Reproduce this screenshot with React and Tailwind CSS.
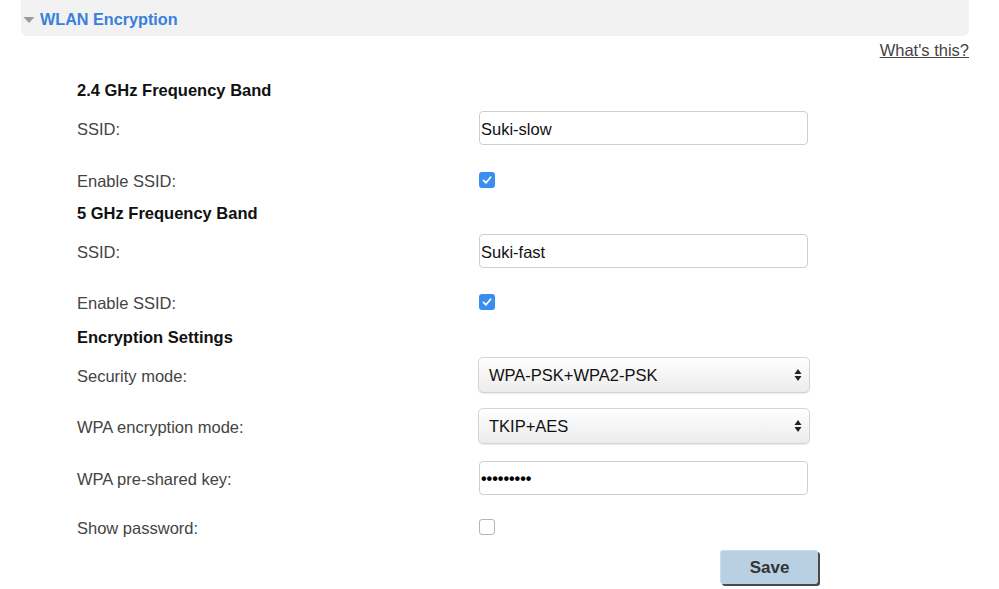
import React from "react";

const font = { fontFamily: '"Liberation Sans", Arial, sans-serif' };

function Check({ checked }) {
  if (checked) {
    return (
      <div className="w-[16px] h-[16px] rounded-[3px] bg-[#3b8ef0] flex items-center justify-center">
        <svg width="12" height="12" viewBox="0 0 12 12">
          <path d="M2.5 6.3 L5 8.8 L9.6 3.2" fill="none" stroke="#fff" strokeWidth="1.7" strokeLinecap="round" strokeLinejoin="round" />
        </svg>
      </div>
    );
  }
  return <div className="w-[16px] h-[16px] rounded-[3px] bg-white border border-[#b5b5b5]" />;
}

function TextBox({ children }) {
  return (
    <div className="w-[329px] h-[34px] border border-[#cfcfcf] rounded-[4px] bg-white flex items-center pl-[1px] pt-[2px] text-[16.5px] text-[#111]">
      {children}
    </div>
  );
}

function Select({ value }) {
  return (
    <div className="w-[332px] h-[36px] border border-[#d4d4d4] rounded-[5px] bg-gradient-to-b from-[#ffffff] to-[#ececec] shadow-[0_1px_1px_rgba(0,0,0,0.08)] flex items-center justify-between pl-[10px] pr-[7px] text-[16.5px] text-[#111]">
      <span className="pt-[1px]">{value}</span>
      <svg width="8" height="14" viewBox="0 0 8 14">
        <path d="M4 1 L7.5 6 L0.5 6 Z" fill="#222" />
        <path d="M4 13 L7.5 8 L0.5 8 Z" fill="#222" />
      </svg>
    </div>
  );
}

function Row({ label, mt, h, children }) {
  return (
    <div className={`flex items-center pl-[77px] ${mt} ${h}`}>
      <div className="w-[402px] text-[16.5px] text-[#444] pt-[2px]">{label}</div>
      <div>{children}</div>
    </div>
  );
}

function Heading({ mt, children }) {
  return (
    <div className={`flex items-center pl-[77px] h-[22px] pt-[2px] ${mt} text-[16.5px] font-bold text-[#111]`}>{children}</div>
  );
}

export default function App() {
  return (
    <div className="w-[999px] h-[589px] bg-white overflow-hidden" style={font}>
      <div className="ml-[21px] w-[948px] h-[36px] bg-[#f2f2f2] rounded-b-[6px] flex items-center">
        <svg width="12" height="8" viewBox="0 0 12 8" className="ml-[2px] mt-[3px]">
          <path d="M0.5 1 L11.5 1 L6 7 Z" fill="#9a9a9a" />
        </svg>
        <span className="ml-[5px] pt-[2px] text-[16.2px] font-bold text-[#3880dc]">WLAN Encryption</span>
      </div>
      <div className="flex justify-end pr-[30px] mt-[2px] h-[22px] items-center">
        <span className="text-[16.5px] pt-[2px] text-[#444] underline">What's this?</span>
      </div>

      <Heading mt="mt-[18px]">2.4 GHz Frequency Band</Heading>
      <Row label="SSID:" mt="mt-[10px]" h="h-[36px]">
        <TextBox>Suki-slow</TextBox>
      </Row>
      <Row label="Enable SSID:" mt="mt-[24px]" h="h-[20px]">
        <Check checked />
      </Row>

      <Heading mt="mt-[11px]">5 GHz Frequency Band</Heading>
      <Row label="SSID:" mt="mt-[10px]" h="h-[36px]">
        <TextBox>Suki-fast</TextBox>
      </Row>
      <Row label="Enable SSID:" mt="mt-[23px]" h="h-[20px]">
        <Check checked />
      </Row>

      <Heading mt="mt-[13px]">Encryption Settings</Heading>
      <Row label="Security mode:" mt="mt-[10px]" h="h-[36px]">
        <div className="-ml-[1px]"><Select value="WPA-PSK+WPA2-PSK" /></div>
      </Row>
      <Row label="WPA encryption mode:" mt="mt-[15px]" h="h-[36px]">
        <div className="-ml-[1px]"><Select value="TKIP+AES" /></div>
      </Row>
      <Row label="WPA pre-shared key:" mt="mt-[16px]" h="h-[36px]">
        <TextBox>
          <span className="text-[16px] font-bold tracking-[0px] text-black">•••••••••</span>
        </TextBox>
      </Row>
      <Row label="Show password:" mt="mt-[21px]" h="h-[20px]">
        <Check checked={false} />
      </Row>

      <div className="flex mt-[13px] pl-[720px]">
        <div className="w-[98px] h-[34px] rounded-[3px] bg-[#b9cfe2] border-t border-l border-[#d0dde8] shadow-[2px_2px_0_#4a4a4a] flex items-center justify-center text-[17px] font-bold text-[#333]">
          Save
        </div>
      </div>
    </div>
  );
}
